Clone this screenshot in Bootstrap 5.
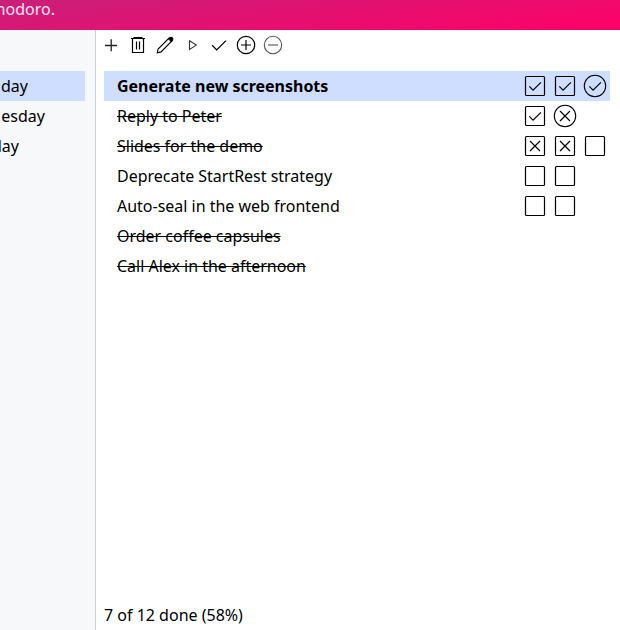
<!DOCTYPE html>
<html lang="en">
<head>
<meta charset="utf-8">
<title>Pomodoro</title>
<link href="https://cdn.jsdelivr.net/npm/bootstrap@5.3.0/dist/css/bootstrap.min.css" rel="stylesheet">
<style>
body{font:16px/30px "Noto Sans",sans-serif;color:#000;background:#fff}
.banner{height:30px;color:#fbe3f0;background:linear-gradient(173deg,#c9207a,#ff0066)}
.banner span{width:55px;height:30px;line-height:18px}
.side{width:96px;background:#f6f8fa;border-right:1px solid #cfd1d5;padding-top:41px}
.day-row{width:85px;height:30px}
.day-row span{display:flex;justify-content:flex-end;overflow:hidden;white-space:nowrap}
.day-a{width:28px}
.day-b{width:45px}
.day-c{width:19px}
.picked{background:#cfdefe}
.tools{height:41px;padding-left:8px}
.tools svg{display:block;width:27px;height:30px;flex:none}
.tools svg:first-child{margin-right:-7px}
.task{height:30px;margin:0 10px 0 8px;padding-left:13px}
.task>span{letter-spacing:-.015px}
.struck{text-decoration:line-through}
.marks{width:90px}
.marks svg{display:block;width:30px;height:30px}
svg{fill:none;stroke:#000;stroke-width:1.2}
.status-line{padding-left:8px}
</style>
<script src="https://cdn.jsdelivr.net/npm/bootstrap@5.3.0/dist/js/bootstrap.bundle.min.js"></script>
</head>
<body class="vh-100 overflow-hidden d-flex flex-column">
<svg width="0" height="0" class="position-absolute">
<symbol id="box" viewBox="0 0 30 30"><rect x="5.5" y="5.5" width="19" height="19" rx="1"/></symbol>
<symbol id="tick" viewBox="0 0 30 30"><path d="M9.3 15.3l3.8 3.8 7.8-7.8"/></symbol>
<symbol id="cross" viewBox="0 0 30 30"><path d="M10 10l10 10M20 10l-10 10"/></symbol>
<symbol id="ring" viewBox="0 0 30 30"><circle cx="15" cy="15" r="10.7" stroke-width="1.1"/></symbol>
</svg>
<header class="banner flex-shrink-0"><span class="d-flex justify-content-end overflow-hidden">modoro.</span></header>
<div class="d-flex flex-grow-1">
<aside class="side flex-shrink-0">
<div class="day-row picked"><span class="day-a">day</span></div>
<div class="day-row"><span class="day-b">esday</span></div>
<div class="day-row"><span class="day-c">day</span></div>
</aside>
<main class="d-flex flex-column flex-grow-1">
<div class="tools d-flex">
<svg viewBox="0 0 27 30"><path d="M1 15.5h12M7.2 9.3v12" stroke="#222" stroke-width="1.3"/></svg>
<svg viewBox="0 0 27 30"><path d="M7 8.5h14M9.5 7.500h9M8.500 9v13.500h11V9M12.500 11.500v8M15.500 11.500v8" stroke-width="1.2"/></svg>
<svg viewBox="0 0 27 30"><path d="M6.300 22.700l.8-3.700L18.300 7.800l2.900 2.900L10 21.900z" stroke-width="1.100"/><path d="M17.900 9.100l1.500-1.500q.9-.6 1.700.1l.4.400q.7.800.1 1.700l-1.500 1.500z" fill="#000"/></svg>
<svg viewBox="0 0 27 30"><path d="M11.500 10.800v8.600l6.800-4.300z" stroke="#333" stroke-width="1.100"/></svg>
<svg viewBox="0 0 27 30"><path d="M7.200 15.300l4.500 4.600 9.300-9.300" stroke-width="1.300"/></svg>
<svg viewBox="0 0 27 30"><circle cx="14" cy="15" r="8.700"/><path d="M9 15h10M14 10v10"/></svg>
<svg viewBox="0 0 27 30"><g stroke="#555" stroke-width="1.100"><circle cx="14" cy="15" r="8.700"/><path d="M9 15h10"/></g></svg>
</div>
<div class="task picked d-flex justify-content-between fw-bold"><span>Generate new screenshots</span><div class="marks d-flex"><svg><use href="#box"/><use href="#tick"/></svg><svg><use href="#box"/><use href="#tick"/></svg><svg><use href="#ring"/><use href="#tick"/></svg></div></div>
<div class="task d-flex justify-content-between"><span class="struck">Reply to Peter</span><div class="marks d-flex"><svg><use href="#box"/><use href="#tick"/></svg><svg><use href="#ring"/><use href="#cross"/></svg></div></div>
<div class="task d-flex justify-content-between"><span class="struck">Slides for the demo</span><div class="marks d-flex"><svg><use href="#box"/><use href="#cross"/></svg><svg><use href="#box"/><use href="#cross"/></svg><svg><use href="#box"/></svg></div></div>
<div class="task d-flex justify-content-between"><span>Deprecate StartRest strategy</span><div class="marks d-flex"><svg><use href="#box"/></svg><svg><use href="#box"/></svg></div></div>
<div class="task d-flex justify-content-between"><span>Auto-seal in the web frontend</span><div class="marks d-flex"><svg><use href="#box"/></svg><svg><use href="#box"/></svg></div></div>
<div class="task"><span class="struck">Order coffee capsules</span></div>
<div class="task"><span class="struck">Call Alex in the afternoon</span></div>
<div class="status-line mt-auto">7 of 12 done (58%)</div>
</main>
</div>
</body>
</html>
